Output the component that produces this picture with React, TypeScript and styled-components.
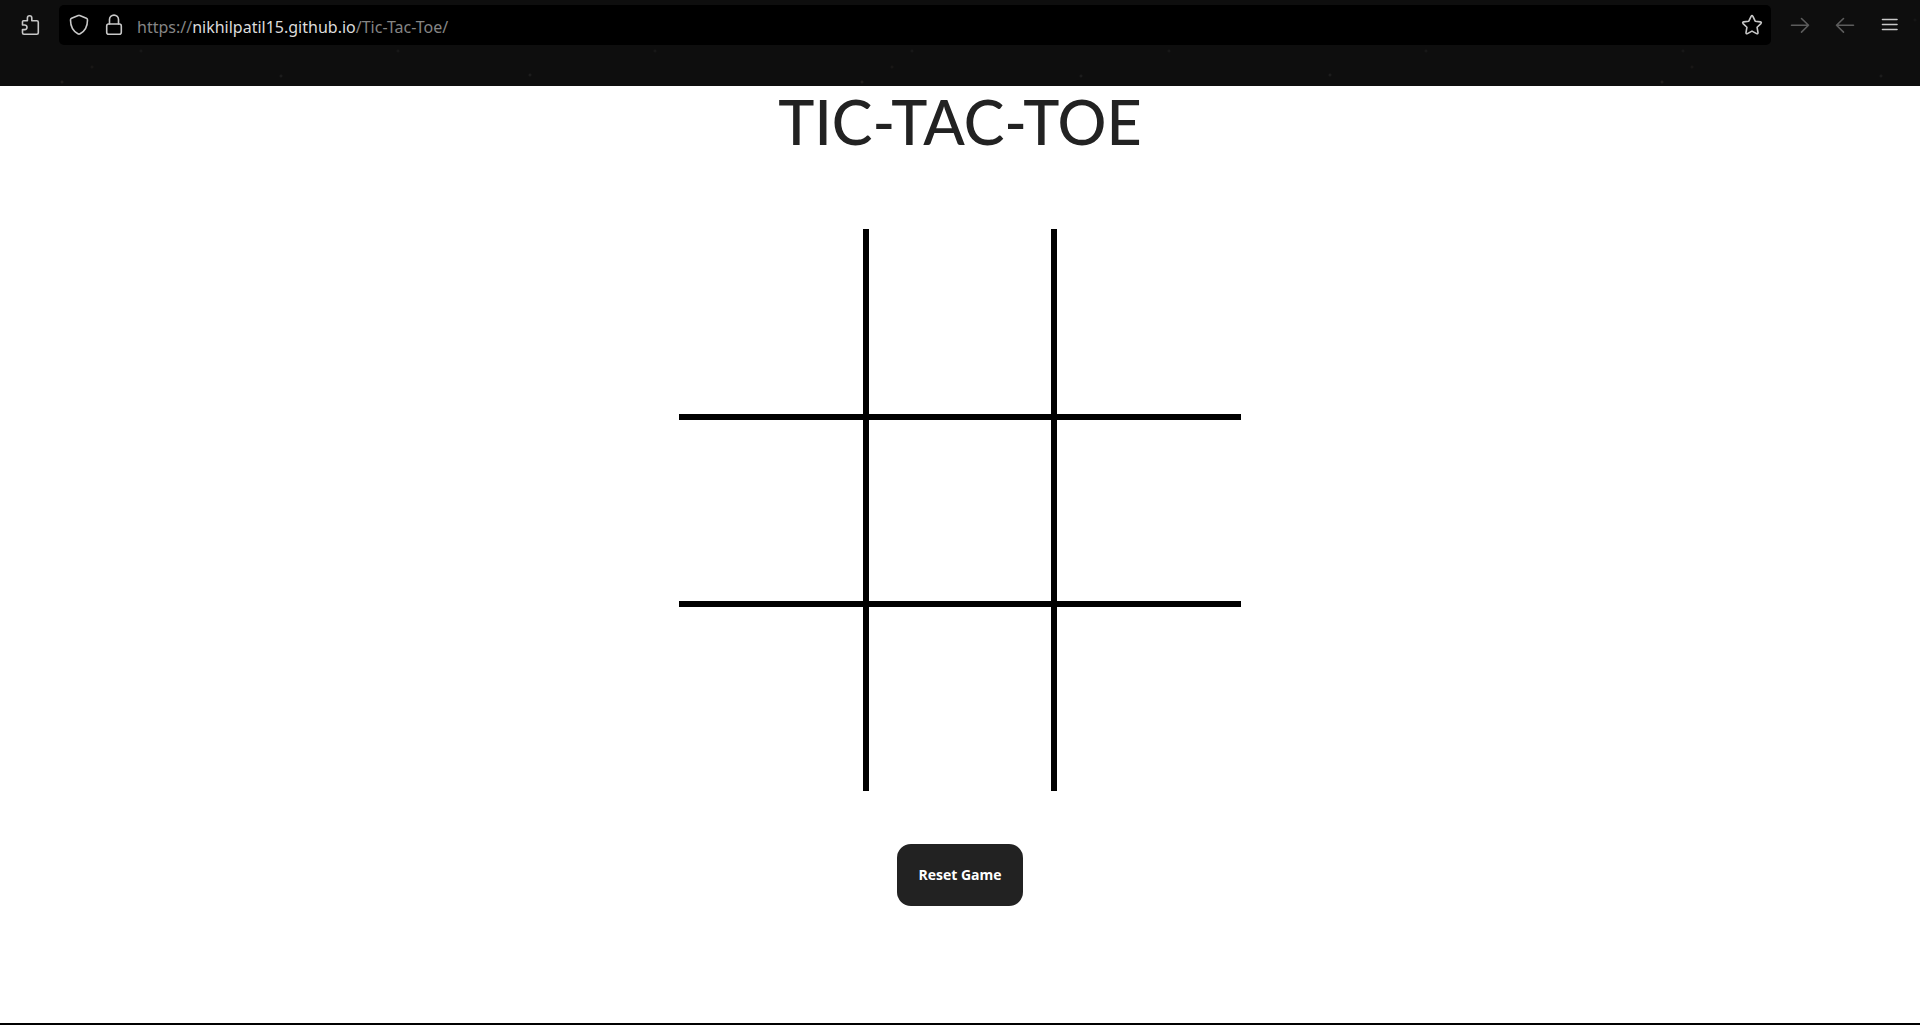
import React, { useState } from "react";
import styled, { createGlobalStyle } from "styled-components";

const GlobalStyle = createGlobalStyle`
  *, *::before, *::after { box-sizing: border-box; }
  body { margin: 0; background: #fff; }
`;

const Window = styled.div`
  display: flex;
  flex-direction: column;
  min-height: 100vh;
  border-bottom: 2px solid #000;
  background: #fff;
`;

const Toolbar = styled.header`
  display: flex;
  align-items: flex-start;
  padding: 5px 18px 41px 19px;
  background-color: #0e0e0e;
  background-image:
    radial-gradient(circle at 62px 82px, #2c2723 0, transparent 2px),
    radial-gradient(circle at 281px 76px, #242424 0, transparent 2px),
    radial-gradient(circle at 92px 67px, #1e1c1a 0, transparent 2px),
    radial-gradient(circle at 530px 75px, #242424 0, transparent 2px),
    radial-gradient(circle at 200px 20px, #1a1a1a 0, transparent 2px),
    radial-gradient(circle at 141px 51px, #1c1c1c 0, transparent 2px);
  background-size: 800px 86px, 800px 86px, 800px 86px, 800px 86px, 343px 86px, 257px 86px;
`;

const IconButton = styled.button<{ $dim?: boolean }>`
  display: flex;
  align-items: center;
  justify-content: center;
  width: 24px;
  height: 40px;
  padding: 0;
  border: 0;
  background: none;
  color: ${(p) => (p.$dim ? "#5c5c5c" : "#c8c8c8")};
  cursor: pointer;
`;

const AddressBar = styled.div`
  display: flex;
  flex: 1;
  align-items: center;
  gap: 11px;
  height: 40px;
  margin: 0 17px 0 16px;
  padding: 0 7px 0 8px;
  border-radius: 5px;
  background: #000;
`;

const Address = styled.a`
  flex: 1;
  padding-top: 3px;
  color: #858585;
  font: 16px/24px "Noto Sans", "Open Sans", sans-serif;
  text-decoration: none;
  white-space: nowrap;
`;

const Host = styled.span`
  color: #dcdcdc;
`;

const Navigation = styled.nav`
  display: flex;
  gap: 21px;
`;

const Icon = styled.svg`
  display: block;
  width: 22px;
  height: 22px;
  fill: none;
  stroke: currentColor;
  stroke-width: 1.6;
  stroke-linecap: round;
  stroke-linejoin: round;
`;

const Game = styled.main`
  display: flex;
  flex: 1;
  flex-direction: column;
  align-items: center;
  font-family: "Open Sans", "Noto Sans", sans-serif;
`;

const Title = styled.h1`
  margin: 0 0 72px;
  color: #222;
  font-family: Lato, "Open Sans", sans-serif;
  font-size: 61px;
  font-weight: 500;
  line-height: 71px;
`;

const Board = styled.div`
  display: grid;
  grid-template-columns: 184px 182px 184px;
  grid-template-rows: 185px 181px 184px;
  gap: 6px;
  background: #000;
`;

const Cell = styled.button`
  padding: 0;
  border: 0;
  background: #fff;
  color: #222;
  font: 500 96px/1 "Open Sans", sans-serif;
  cursor: pointer;
`;

const ResetButton = styled.button`
  margin-top: 53px;
  padding: 21px;
  border: 0;
  border-radius: 14px;
  background: #222;
  color: #fff;
  font: 700 14px/20px "Open Sans", "Noto Sans", sans-serif;
  cursor: pointer;
`;

const emptyBoard = (): string[] => Array(9).fill("");

export default function App() {
  const [marks, setMarks] = useState<string[]>(emptyBoard);

  const play = (index: number) => {
    if (marks[index]) return;
    const turn = marks.filter(Boolean).length % 2 ? "X" : "O";
    setMarks(marks.map((mark, i) => (i === index ? turn : mark)));
  };

  return (
    <Window>
      <GlobalStyle />
      <Toolbar>
        <IconButton aria-label="Extensions">
          <Icon viewBox="0 0 22 22">
            <path d="M3.500 6.700h3.900V4a2.200 2.200 0 0 1 4.400 0v2.700h5q1.500 0 1.500 1.500v10.600q0 1.500-1.500 1.500H4q-1.500 0-1.500-1.500v-3.200h2.200a2.200 2.200 0 0 0 0-4.600H2.500V7.700q0-1 1-1z" />
          </Icon>
        </IconButton>
        <AddressBar>
          <IconButton aria-label="Tracking protection">
            <Icon viewBox="0 0 22 22">
              <path d="M10.300 1.600q.7-.4 1.400 0l6.700 2.700q1.100.5 1.100 1.600c0 6-2.700 11.200-7.400 13.900q-1.100.6-2.200 0C5.200 17.100 2.500 11.900 2.500 5.900q0-1.100 1.100-1.600z" />
            </Icon>
          </IconButton>
          <IconButton aria-label="Connection secure">
            <Icon viewBox="0 0 22 22">
              <rect x="3.700" y="10" width="14.600" height="10.300" rx="2" />
              <path d="M6.500 10V5.600a4.500 4.500 0 0 1 9 0V10" />
            </Icon>
          </IconButton>
          <Address href="https://nikhilpatil15.github.io/Tic-Tac-Toe/">
            https://<Host>nikhilpatil15.github.io</Host>/Tic-Tac-Toe/
          </Address>
          <IconButton aria-label="Bookmark this page">
            <Icon viewBox="0 0 22 22">
              <path d="M10.100 2.300q.9-1.500 1.800 0l2.300 4.900 5.200.7q1.600.4.500 1.700l-3.800 3.700.9 5.300q.1 1.700-1.400 1L11 17.100l-4.600 2.500q-1.500.7-1.400-1l.9-5.300-3.800-3.700q-1.100-1.300.5-1.700l5.200-.7z" />
            </Icon>
          </IconButton>
        </AddressBar>
        <Navigation aria-label="Browser">
          <IconButton $dim aria-label="Forward">
            <Icon viewBox="0 0 22 22">
              <path d="M2.500 11.300h17M12.500 4.500l7 6.800-7 6.800" />
            </Icon>
          </IconButton>
          <IconButton $dim aria-label="Back">
            <Icon viewBox="0 0 22 22">
              <path d="M19.500 11.300h-17M9.500 4.500l-7 6.800 7 6.800" />
            </Icon>
          </IconButton>
          <IconButton aria-label="Menu">
            <Icon viewBox="0 0 22 22">
              <path d="M3.500 5.500h14.500M3.500 10.500h14.500M3.500 15.500h14.500" />
            </Icon>
          </IconButton>
        </Navigation>
      </Toolbar>
      <Game>
        <Title>TIC-TAC-TOE</Title>
        <Board>
          {marks.map((mark, index) => (
            <Cell key={index} aria-label={`Square ${index + 1}`} onClick={() => play(index)}>
              {mark}
            </Cell>
          ))}
        </Board>
        <ResetButton onClick={() => setMarks(emptyBoard())}>Reset Game</ResetButton>
      </Game>
    </Window>
  );
}
